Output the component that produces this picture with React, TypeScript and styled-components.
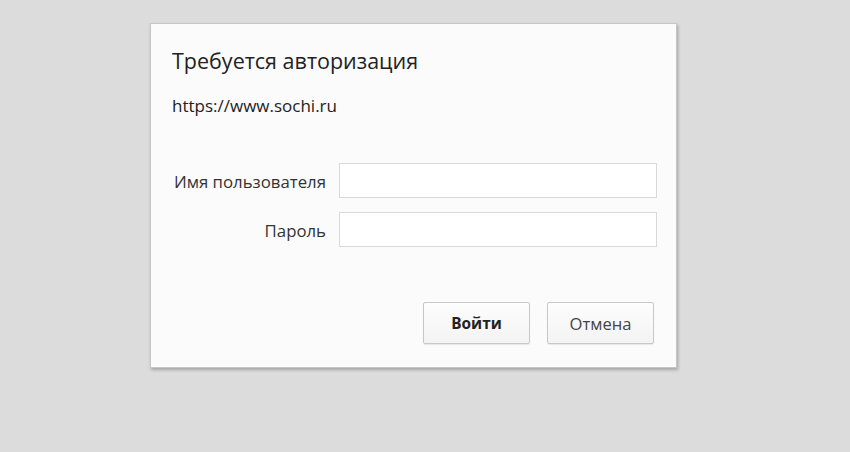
import React from "react";
import styled, { createGlobalStyle } from "styled-components";

const Global = createGlobalStyle`
  html, body { margin: 0; padding: 0; background: #dcdcdc; }
  body { font-family: "Open Sans", "Noto Sans", sans-serif; }
`;

const Page = styled.div`
  width: 850px;
  height: 452px;
  box-sizing: border-box;
  padding: 23px 0 0 150px;
  background: #dcdcdc;
`;

const Dialog = styled.div`
  width: 527px;
  height: 345px;
  box-sizing: border-box;
  background: #fbfbfb;
  border: 1px solid #c6c6c6;
  box-shadow: 1px 2px 3px rgba(0, 0, 0, 0.25);
  padding: 22px 19px 0 21px;
  display: flex;
  flex-direction: column;
  color: #222;
`;

const Title = styled.h1`
  margin: 0;
  font-size: 21.5px;
  font-weight: 400;
  line-height: 30px;
  color: #222;
`;

const Origin = styled.div`
  margin-top: 20px;
  font-size: 17px;
  line-height: 20px;
  color: #222;
`;

const Form = styled.div`
  margin-top: 47px;
  display: grid;
  grid-template-columns: auto 318px;
  justify-content: end;
  column-gap: 13px;
  row-gap: 14px;
  align-items: center;
`;

const Label = styled.label`
  text-align: right;
  white-space: nowrap;
  font-size: 16.8px;
  line-height: 22px;
  color: #333;
  padding-top: 3px;
`;

const Input = styled.input`
  box-sizing: border-box;
  width: 318px;
  height: 35px;
  border: 1px solid #d9d9d9;
  background: #fff;
  outline: none;
  padding: 0 8px;
  font-size: 15px;
  font-family: inherit;
`;

const Actions = styled.div`
  margin-top: 55px;
  display: flex;
  justify-content: flex-end;
  gap: 17px;
  padding-right: 3px;
`;

const Button = styled.button<{ $primary?: boolean }>`
  box-sizing: border-box;
  width: 107px;
  height: 42px;
  border: 1px solid #c8c8c8;
  border-radius: 2px;
  background: linear-gradient(#fdfdfd, #f3f3f3);
  box-shadow: 0 1px 1px rgba(0, 0, 0, 0.08);
  font-family: inherit;
  font-size: ${(p) => (p.$primary ? "15.4px" : "16.6px")};
  font-weight: ${(p) => (p.$primary ? 700 : 400)};
  color: ${(p) => (p.$primary ? "#222" : "#444")};
  cursor: pointer;
`;

export default function App() {
  return (
    <>
      <Global />
      <Page>
        <Dialog>
          <Title>Требуется авторизация</Title>
          <Origin>https://www.sochi.ru</Origin>
          <Form>
            <Label htmlFor="u">Имя пользователя</Label>
            <Input id="u" type="text" />
            <Label htmlFor="p">Пароль</Label>
            <Input id="p" type="password" />
          </Form>
          <Actions>
            <Button $primary>Войти</Button>
            <Button>Отмена</Button>
          </Actions>
        </Dialog>
      </Page>
    </>
  );
}
